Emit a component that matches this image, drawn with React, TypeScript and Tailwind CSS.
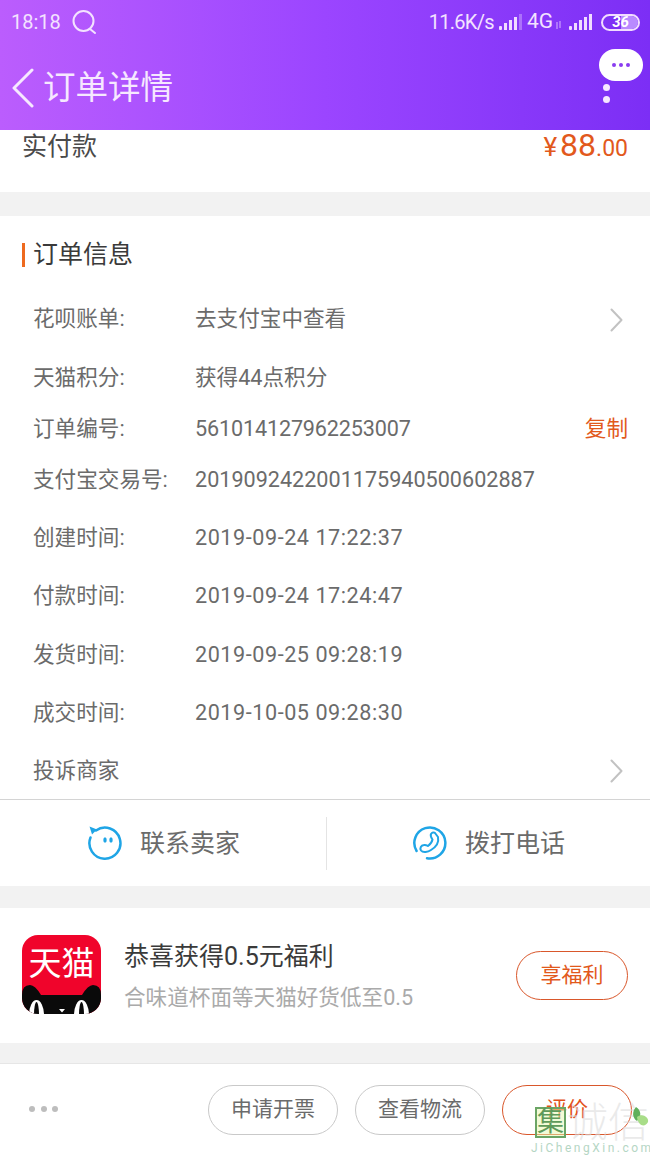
const cjk = "font-['Roboto','Noto_Sans_CJK_SC',sans-serif]";

const rows = [
  { label: "花呗账单:", value: "去支付宝中查看", h: "h-[59px]", arrow: true },
  { label: "天猫积分:", value: "获得44点积分", h: "h-[59px]" },
  { label: "订单编号:", value: "561014127962253007", h: "h-[43px]", track: "tracking-[-0.15px]", copy: true },
  { label: "支付宝交易号:", value: "2019092422001175940500602887", h: "h-[58px]" },
  { label: "创建时间:", value: "2019-09-24 17:22:37", h: "h-[58px]", track: "tracking-[0.55px]" },
  { label: "付款时间:", value: "2019-09-24 17:24:47", h: "h-[59px]", track: "tracking-[0.55px]" },
  { label: "发货时间:", value: "2019-09-25 09:28:19", h: "h-[58px]", track: "tracking-[0.55px]" },
  { label: "成交时间:", value: "2019-10-05 09:28:30", h: "h-[58px]", track: "tracking-[0.55px]" },
];

const Arrow = () => (
  <svg width="13" height="24" viewBox="0 0 13 24" fill="none" stroke="#c2c2c2" strokeWidth="2" strokeLinecap="round" strokeLinejoin="round">
    <path d="M1.500 1.500L11.500 12 1.500 22.500" />
  </svg>
);

const SignalBars = ({ faded }: { faded?: boolean }) => (
  <svg width="23" height="18" viewBox="0 0 23 18" fill="#f1dcff">
    <rect x="0" y="13" width="3" height="4" rx="1" />
    <rect x="5" y="10" width="3" height="7" />
    <rect x="10" y="7" width="3" height="10" />
    <rect x="15" y="4" width="3" height="13" />
    <rect x="20" y="1" width="3" height="16" opacity={faded ? 0.35 : 1} />
  </svg>
);

const StatusBar = () => (
  <div className="flex h-[44px] items-center justify-between pl-[11px] pr-[10px] text-[#f3e2ff]">
    <div className="flex items-center gap-[11px]">
      <span className="text-[20px]">18:18</span>
      <svg width="24" height="24" viewBox="0 0 24 24" fill="none" stroke="#f3e2ff" strokeWidth="2">
        <circle cx="11.500" cy="11" r="10" />
        <path d="M18 19l5 4" strokeLinecap="round" />
      </svg>
    </div>
    <div className="flex items-center">
      <span className="text-[20px] tracking-[-0.7px]">11.6K/s</span>
      <span className="ml-[5px]">
        <SignalBars faded />
      </span>
      <span className="ml-[5px] text-[21px]">4G</span>
      <svg className="ml-[2px] mt-[6px]" width="7" height="8" viewBox="0 0 7 8" fill="none" stroke="#d8b4ff" strokeWidth="1">
        <path d="M2 8V1M5 0v7" />
      </svg>
      <span className="ml-[7px]">
        <SignalBars />
      </span>
      <div className="relative ml-[9px] flex h-[17px] w-[39px] items-center justify-center overflow-hidden rounded-full border-2 border-[#f1dcff] text-[15px] font-bold italic leading-none text-white">
        <div className="absolute inset-y-0 right-0 w-[48%] bg-[#b98aff]" />
        <span className="relative">36</span>
      </div>
    </div>
  </div>
);

const TmallIcon = () => (
  <div className="relative mb-[2px] h-[79px] w-[79px] shrink-0 overflow-hidden rounded-[16px] bg-[#f0042b]">
    <svg className="absolute inset-0" width="79" height="79" viewBox="0 0 79 79">
      <path d="M0 60 Q0 50 8 50 Q13 50 19 60 L60 60 Q66 50 71 50 Q79 50 79 60 L79 79 L0 79 Z" fill="#0a0a0a" />
      <ellipse cx="14.500" cy="80" rx="7.500" ry="15" fill="#fff" />
      <ellipse cx="59.500" cy="80" rx="7.500" ry="15" fill="#fff" />
      <ellipse cx="14.500" cy="80" rx="2.500" ry="13" fill="#0a0a0a" />
      <ellipse cx="59.500" cy="80" rx="2.500" ry="13" fill="#0a0a0a" />
      <path d="M37 74h6l-3 3.500z" fill="#fff" />
    </svg>
    <div className="absolute left-0 right-0 top-[7px] flex justify-center text-[33px] leading-[44px] text-white">天猫</div>
  </div>
);

const Pill = ({ children, active }: { children: string; active?: boolean }) => (
  <div
    className={
      "flex h-[50px] w-[130px] items-center justify-center rounded-full border text-[21px] " +
      (active ? "border-[#d9572b] text-[#e2521b]" : "border-[#c9c9c9] text-[#6b6b6b]")
    }
  >
    {children}
  </div>
);

export default function App() {
  return (
    <div className={`relative h-[1155px] w-[650px] overflow-hidden bg-[#f2f2f2] ${cjk}`}>
      <div className="h-[130px] bg-gradient-to-r from-[#bb5dfd] via-[#9b45ff] to-[#7c2ef5]">
        <StatusBar />
        <div className="flex h-[86px] items-start justify-between">
          <div className="flex items-center pl-[11px] pt-[22px] text-white">
            <svg width="24" height="40" viewBox="0 0 24 40" fill="none" stroke="#f6e8ff" strokeWidth="3" strokeLinecap="round" strokeLinejoin="round">
              <path d="M21 2L3 20l18 18" />
            </svg>
            <span className="ml-[8px] text-[32.500px] leading-[44px] text-[#f6e8ff]">订单详情</span>
          </div>
          <div className="relative mr-[7px] mt-[5px] flex h-[32px] w-[44px] items-center justify-center gap-[3px] rounded-full bg-white">
            <span className="h-[4px] w-[4px] rounded-full bg-[#8a3df0]" />
            <span className="h-[4px] w-[4px] rounded-full bg-[#8a3df0]" />
            <span className="h-[4px] w-[4px] rounded-full bg-[#8a3df0]" />
            <span className="absolute left-[4px] top-[35px] h-[7px] w-[7px] rounded-full bg-[#f6e8ff]" />
            <span className="absolute left-[4px] top-[47px] h-[7px] w-[7px] rounded-full bg-[#f6e8ff]" />
          </div>
        </div>
      </div>

      <div className="flex h-[62px] items-start justify-between bg-white pl-[22px] pr-[22px]">
        <span className="mt-[1px] text-[25px] leading-[32px] text-[#4a4a4a]">实付款</span>
        <span className="mt-[-3px] leading-[36px] text-[#e2591c]">
          <span className="text-[26px]">¥</span>
          <span className="ml-[3px] text-[32px]">88</span>
          <span className="text-[23px]">.00</span>
        </span>
      </div>

      <div className="mt-[24px] bg-white">
        <div className="flex h-[74px] items-center pl-[22px] pt-[4px]">
          <div className="h-[24px] w-[3px] bg-[#ee6a1f]" />
          <span className="ml-[8px] text-[25px] text-[#3a3a3a]">订单信息</span>
        </div>
        {rows.map((row) => (
          <div key={row.label} className={`flex items-center pl-[33px] pr-[22px] text-[21.600px] text-[#6b6b6b] ${row.h}`}>
            <span className="w-[162px] shrink-0">{row.label}</span>
            <span className={`flex-1 ${row.track ?? ""}`}>{row.value}</span>
            {row.arrow && (
              <span className="mr-[5px]">
                <Arrow />
              </span>
            )}
            {row.copy && <span className="text-[#e2591c]">复制</span>}
          </div>
        ))}
        <div className="flex h-[58px] items-center justify-between border-b border-[#d4d4d4] pl-[33px] pr-[27px] pt-[1px] text-[21.600px] text-[#6b6b6b]">
          <span>投诉商家</span>
          <Arrow />
        </div>
        <div className="flex h-[86px] items-center">
          <div className="flex h-[53px] flex-1 items-center justify-center gap-[17px] border-r border-[#e4e4e4] pl-[2px] pr-[1px]">
            <svg width="36" height="36" viewBox="0 0 36 36" fill="none" stroke="#1fa5e6" strokeWidth="2.500" strokeLinecap="round">
              <path d="M9 5.500A15.500 15.500 0 1 1 3.500 12.500" />
              <path d="M2.500 1.500L10 4.500 5 9.500Z" fill="#1fa5e6" stroke="none" />
              <ellipse cx="18" cy="15" rx="1.700" ry="2.800" fill="#1fa5e6" stroke="none" />
              <ellipse cx="24" cy="15" rx="1.700" ry="2.800" fill="#1fa5e6" stroke="none" />
            </svg>
            <span className="pt-[2px] text-[25px] text-[#6b6b6b]">联系卖家</span>
          </div>
          <div className="flex h-[53px] flex-1 items-center justify-center gap-[17px]">
            <svg width="36" height="36" viewBox="0 0 36 36" fill="none" stroke="#1fa5e6" strokeWidth="2.500" strokeLinecap="round">
              <path d="M4.600 26A15.500 15.500 0 1 1 15 33.200" />
              <path
                d="M19 9C20 7.500 22 7 23 8L26 12C27 17 24 22 19 25C16 27 11 28 9 25.500C7.500 23 9 20.500 12 20C14 19.500 15 20.500 16 21C18 19.500 20 17 20.500 14.500C19.500 13 18 11 19 9Z"
                strokeWidth="2"
                strokeLinejoin="round"
              />
            </svg>
            <span className="pt-[2px] text-[25px] text-[#6b6b6b]">拨打电话</span>
          </div>
        </div>
      </div>

      <div className="mt-[22px] flex h-[135px] items-center bg-white pl-[22px] pr-[22px]">
        <TmallIcon />
        <div className="ml-[23px] flex-1 pt-[2px]">
          <div className="text-[25px] leading-[34px] text-[#3a3a3a]">恭喜获得0.5元福利</div>
          <div className="mt-[9px] text-[21.600px] leading-[30px] text-[#aaaaaa]">合味道杯面等天猫好货低至0.5</div>
        </div>
        <div className="flex h-[49px] w-[112px] items-center justify-center rounded-full border border-[#d9572b] text-[21px] text-[#e2591c]">享福利</div>
      </div>

      <div className="mt-[20px] flex h-[92px] items-center border-t border-[#e6e6e6] bg-white pl-[29px] pr-[18px]">
        <div className="mb-[2px] flex flex-1 gap-[5.500px]">
          <span className="h-[6px] w-[6px] rounded-full bg-[#bdbdbd]" />
          <span className="h-[6px] w-[6px] rounded-full bg-[#bdbdbd]" />
          <span className="h-[6px] w-[6px] rounded-full bg-[#bdbdbd]" />
        </div>
        <div className="flex gap-[17px]">
          <Pill>申请开票</Pill>
          <Pill>查看物流</Pill>
          <Pill active>评价</Pill>
        </div>
      </div>

      {/* watermark */}
      <div className="absolute left-[531px] top-[1106px] h-[49px] w-[119px]">
        <div className="absolute left-[36px] top-0 whitespace-nowrap text-[41px] font-light leading-[34px] text-[#dcdcdc]/60">诚信</div>
        <svg className="absolute left-[98px] top-[1px]" width="20" height="24" viewBox="0 0 20 24">
          <path d="M7 0C12 3 13 9 8 14C3 11 3 4 7 0Z" fill="#5fb05a" />
          <path d="M8 10C13 6 20 10 19 15C16 21 9 19 8 10Z" fill="#a8dd88" />
        </svg>
        <div className="absolute left-[4px] top-[1px] flex h-[31px] w-[31px] items-center justify-center border-2 border-[#6ba565] bg-[#e6f8b0]/50 text-[27px] leading-none text-[#5f9a5a]">集</div>
        <div className="absolute left-0 top-[35px] whitespace-nowrap text-[12px] leading-[15px] tracking-[2.500px] text-[#b5d6c4]">JiChengXin.com</div>
      </div>
    </div>
  );
}
